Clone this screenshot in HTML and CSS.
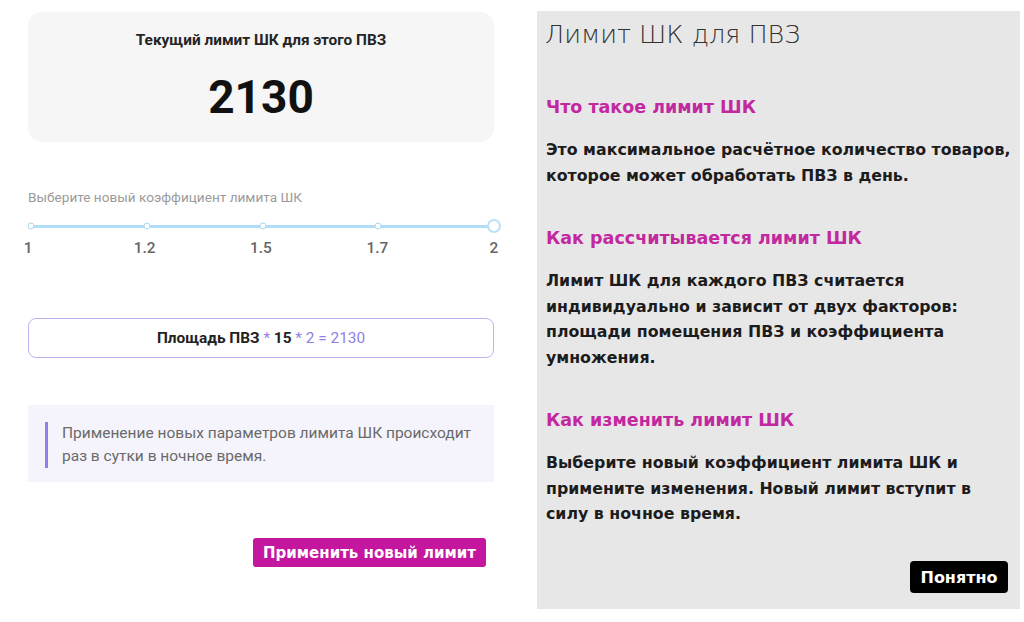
FILE: index.html
```html
<!DOCTYPE html>
<html lang="ru">
<head>
<meta charset="utf-8">
<title>Лимит ШК</title>
<link rel="stylesheet" href="styles.css">
</head>
<body>
<main class="page">
  <section class="limit">
    <div class="current">
      <div class="current-title">Текущий лимит ШК для этого ПВЗ</div>
      <div class="current-value">2130</div>
    </div>

    <div class="coef-label">Выберите новый коэффициент лимита ШК</div>
    <div class="slider">
      <div class="track"></div>
      <span class="dot" style="left: 0%"></span>
      <span class="dot" style="left: 25%"></span>
      <span class="dot" style="left: 50%"></span>
      <span class="dot" style="left: 75%"></span>
      <span class="thumb" style="left: 100%"></span>
    </div>
    <div class="ticks">
      <span>1</span><span>1.2</span><span>1.5</span><span>1.7</span><span>2</span>
    </div>

    <div class="formula">
      <b>Площадь ПВЗ</b><span class="op"> * </span><b>15</b><span class="op"> * 2 = 2130</span>
    </div>

    <div class="notice">
      <p>Применение новых параметров лимита ШК происходит раз в сутки в ночное время.</p>
    </div>

    <div class="actions">
      <button class="apply">Применить новый лимит</button>
    </div>
  </section>

  <aside class="help">
    <h1 class="help-title">Лимит ШК для ПВЗ</h1>
    <h2 class="help-head">Что такое лимит ШК</h2>
    <p class="help-text">Это максимальное расчётное количество товаров, которое может обработать ПВЗ в день.</p>
    <h2 class="help-head">Как рассчитывается лимит ШК</h2>
    <p class="help-text">Лимит ШК для каждого ПВЗ считается индивидуально и зависит от двух факторов: площади помещения ПВЗ и коэффициента умножения.</p>
    <h2 class="help-head">Как изменить лимит ШК</h2>
    <p class="help-text">Выберите новый коэффициент лимита ШК и примените изменения. Новый лимит вступит в силу в ночное время.</p>
    <div class="help-actions">
      <button class="ok">Понятно</button>
    </div>
  </aside>
</main>
</body>
</html>
```

FILE: styles.css
```css
* { box-sizing: border-box; }

html, body {
  margin: 0;
  background: #fff;
}

body {
  width: 1024px;
  height: 622px;
  overflow: hidden;
  font-family: Roboto, "Liberation Sans", sans-serif;
}

.page {
  display: flex;
  align-items: flex-start;
  gap: 43px;
  padding: 11px 0 0 28px;
}

/* left column: current limit and the coefficient form */
.limit {
  width: 466px;
  flex: none;
}

.current {
  margin-top: 1px;
  height: 130px;
  background: #f6f6f6;
  border-radius: 14px;
  padding-top: 18px;
  text-align: center;
}

.current-title {
  font-size: 15.4px;
  line-height: 20px;
  font-weight: 700;
  color: #252525;
}

.current-value {
  margin-top: 20px;
  font-size: 46px;
  line-height: 54px;
  font-weight: 700;
  color: #111;
}

.coef-label {
  margin-top: 47px;
  font-size: 13.6px;
  line-height: 16px;
  color: #9b9b9b;
}

.slider {
  position: relative;
  margin: 14px 0 0 3px;
  width: 463px;
  height: 14px;
}

.track {
  position: absolute;
  left: 0;
  right: 0;
  top: 6px;
  height: 3px;
  background: #b0def4;
  border-radius: 2px;
}

.dot,
.thumb {
  position: absolute;
  top: 50%;
  transform: translate(-50%, -50%);
  border-radius: 50%;
  background: #fff;
}

.dot {
  width: 7px;
  height: 7px;
  border: 1.5px solid #a9d9f1;
}

.thumb {
  width: 14px;
  height: 14px;
  border: 2px solid #b9e1f5;
}

.ticks {
  display: grid;
  grid-template-columns: repeat(5, 1fr);
  width: 582px;
  margin: 7px 0 0 -58px;
  font-size: 15.4px;
  line-height: 16px;
  font-weight: 500;
  color: #666;
  text-align: center;
}

.formula {
  margin-top: 62px;
  height: 40px;
  border: 1.5px solid #bdb3f1;
  border-radius: 8px;
  display: flex;
  align-items: center;
  justify-content: center;
  font-size: 15.4px;
  color: #8d82e4;
  white-space: pre;
}

.formula b {
  font-weight: 700;
  color: #222;
}

.notice {
  margin-top: 47px;
  height: 77px;
  background: #f5f4fc;
  padding: 17px 10px 0 17px;
}

.notice p {
  margin: 0;
  border-left: 3px solid #8f81e6;
  padding-left: 14px;
  font-size: 15.5px;
  line-height: 23px;
  color: #6a6a6a;
}

.actions {
  display: flex;
  justify-content: flex-end;
  margin-top: 56px;
  padding-right: 8px;
}

.apply {
  width: 233px;
  height: 29px;
  border: none;
  border-radius: 3px;
  background: #c4169f;
  color: #fff;
  font-family: "DejaVu Sans", sans-serif;
  font-weight: 700;
  font-size: 15px;
  padding: 0;
}

/* right column: help sheet */
.help {
  width: 483px;
  height: 598px;
  flex: none;
  background: #e8e7e8;
  padding: 8px 4px 0 8px;
  font-family: "DejaVu Sans", sans-serif;
  display: flex;
  flex-direction: column;
}

.help-title {
  margin: 0;
  font-size: 25.5px;
  line-height: 30px;
  font-weight: 200;
  color: #333;
}

.help-head {
  margin: 38px 0 0 1px;
  font-size: 17.5px;
  line-height: 24px;
  font-weight: 700;
  color: #c2289f;
}

.help-title + .help-head {
  margin-top: 46px;
}

.help-text {
  margin: 18px 0 0 1px;
  font-size: 15.8px;
  line-height: 25.5px;
  font-weight: 700;
  color: #1c1c1c;
}

.help-actions {
  margin-top: auto;
  margin-bottom: 16px;
  padding-right: 8px;
  display: flex;
  justify-content: flex-end;
}

.ok {
  width: 98px;
  height: 32px;
  border: none;
  border-radius: 4px;
  background: #000;
  color: #fff;
  font-family: "DejaVu Sans", sans-serif;
  font-weight: 700;
  font-size: 16px;
  padding: 0;
}
```
